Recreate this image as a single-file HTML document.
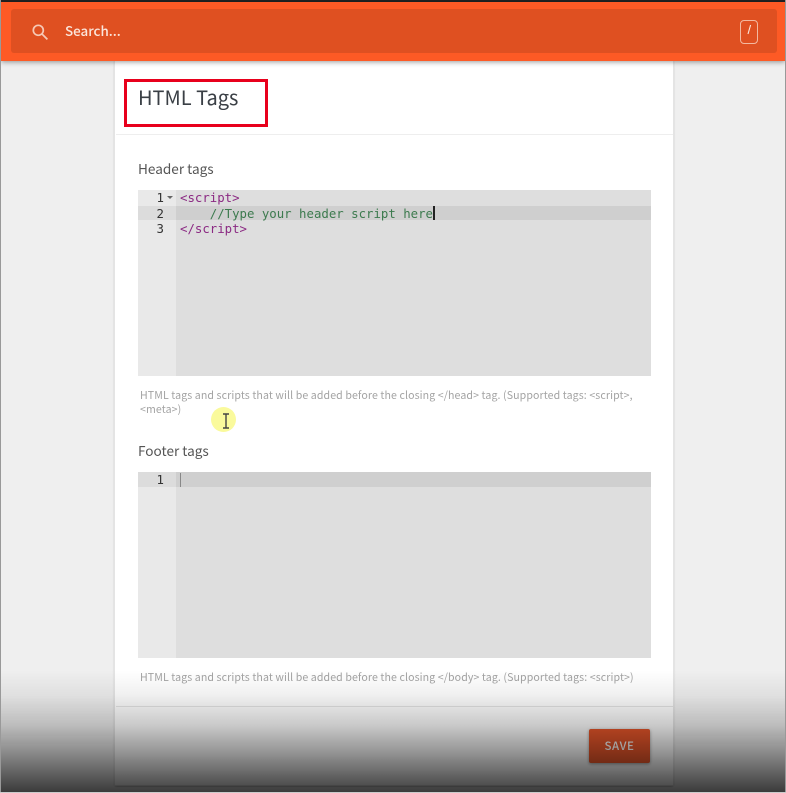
<!DOCTYPE html>
<html>
<head>
<meta charset="utf-8">
<style>
html,body{margin:0;padding:0;width:786px;height:793px;overflow:hidden;background:#efefef;}
body{position:relative;font-family:"Noto Sans CJK JP","Liberation Sans",sans-serif;}
#w{position:absolute;left:0;top:0;width:786px;height:793px;overflow:hidden;filter:blur(.3px);}
.a{position:absolute;white-space:nowrap;}
.code{font-family:"DejaVu Sans Mono","Liberation Mono",monospace;font-size:12.36px;line-height:15px;}
.num{font-family:"DejaVu Sans Mono","Liberation Mono",monospace;font-size:12.36px;line-height:15px;color:#333;width:26px;text-align:right;left:138px;}
.help{font-size:10.6px;color:#a3a3a3;line-height:15px;letter-spacing:.1px;}
.lab{font-size:13.6px;color:#555;line-height:20px;}
</style>
</head>
<body>
<div id="w">
<!-- card -->
<div class="a" style="left:115px;top:60px;width:558px;height:725px;background:#fff;box-shadow:0 0 0 1px #e4e4e4,0 1px 2px rgba(0,0,0,.5);"></div>
<div class="a" style="left:116px;top:134px;width:557px;height:1px;background:#eee;"></div>
<div class="a" style="left:116px;top:706px;width:557px;height:1px;background:#e6e6e6;"></div>

<!-- topbar -->
<div class="a" style="left:0;top:0;width:786px;height:2px;background:#222;"></div>
<div class="a" style="left:1px;top:2px;width:784px;height:59px;background:#fd5a25;box-shadow:0 1px 5px rgba(0,0,0,.4);"></div>
<div class="a" style="left:11px;top:9px;width:766px;height:44px;background:#df5021;border-radius:3px;"></div>
<svg class="a" style="left:31px;top:23px;" width="18" height="18" viewBox="0 0 18 18" fill="none" stroke="#f6c9b6" stroke-width="1.7"><circle cx="7.3" cy="7.3" r="5"/><path d="M11 11l5.4 5.4"/></svg>
<div class="a" style="left:65px;top:20px;font-size:13.4px;line-height:20px;color:#fbe6dc;font-weight:500;">Search...</div>
<div class="a" style="left:740px;top:20px;width:16px;height:22px;border:1px solid #f3b9a0;border-radius:4px;"></div>
<svg class="a" style="left:745px;top:24px;" width="8" height="12" viewBox="0 0 8 12" fill="none" stroke="#fbe6dc" stroke-width="1.1"><path d="M5.6 1L3 10"/></svg>

<!-- title -->
<div class="a" style="left:124px;top:79px;width:138px;height:42px;border:3px solid #e8001c;"></div>
<div class="a" style="left:138px;top:84px;font-size:20px;line-height:26px;color:#3a3f45;">HTML Tags</div>

<!-- header tags -->
<div class="a lab" style="left:138px;top:158px;">Header tags</div>
<div class="a" style="left:138px;top:190px;width:513px;height:186px;background:#dedede;"></div>
<div class="a" style="left:138px;top:190px;width:38px;height:186px;background:#e9e9e9;"></div>
<div class="a" style="left:138px;top:206px;width:38px;height:14px;background:#dcdcdc;"></div>
<div class="a" style="left:176px;top:206px;width:475px;height:14px;background:#cfcfcf;"></div>
<div class="a num" style="top:191px;">1</div>
<div class="a num" style="top:207px;">2</div>
<div class="a num" style="top:222px;">3</div>
<div class="a" style="left:167px;top:196px;width:0;height:0;border-left:3px solid transparent;border-right:3px solid transparent;border-top:3px solid #666;"></div>
<div class="a code" style="left:180px;top:191px;color:#8b2a83;">&lt;script&gt;</div>
<div class="a code" style="left:180px;top:207px;color:#3c7a4e;white-space:pre;">    //Type your header script here</div>
<div class="a" style="left:433px;top:206px;width:1.5px;height:14px;background:#222;"></div>
<div class="a code" style="left:180px;top:222px;color:#8b2a83;">&lt;/script&gt;</div>

<div class="a help" style="left:140px;top:388px;">HTML tags and scripts that will be added before the closing &lt;/head&gt; tag. (Supported tags: &lt;script&gt;,</div>
<div class="a help" style="left:140px;top:402px;">&lt;meta&gt;)</div>

<!-- cursor highlight -->
<div class="a" style="left:211px;top:407px;width:25px;height:25px;border-radius:50%;background:#fafa9c;"></div>
<svg class="a" style="left:221px;top:412px;" width="10" height="18" viewBox="0 0 10 18" fill="none" stroke="#444" stroke-width="1.4"><path d="M2 2h6M5 2v14M2 16h6"/></svg>

<!-- footer tags -->
<div class="a lab" style="left:138px;top:440px;">Footer tags</div>
<div class="a" style="left:138px;top:472px;width:513px;height:186px;background:#dedede;"></div>
<div class="a" style="left:138px;top:472px;width:38px;height:186px;background:#e9e9e9;"></div>
<div class="a" style="left:138px;top:472px;width:38px;height:15px;background:#dcdcdc;"></div>
<div class="a" style="left:176px;top:472px;width:475px;height:15px;background:#cfcfcf;"></div>
<div class="a num" style="top:473px;">1</div>
<div class="a" style="left:180px;top:473px;width:1px;height:14px;background:#888;"></div>

<div class="a help" style="left:140px;top:670px;">HTML tags and scripts that will be added before the closing &lt;/body&gt; tag. (Supported tags: &lt;script&gt;)</div>

<!-- save -->
<div class="a" style="left:589px;top:729px;width:61px;height:34px;background:#e8562a;border-radius:2px;box-shadow:0 1px 3px rgba(0,0,0,.4);color:#fff;font-size:11.5px;font-weight:500;line-height:34px;text-align:center;letter-spacing:.6px;">SAVE</div>

<!-- bottom fade -->
<div class="a" style="left:0;top:670px;width:786px;height:123px;background:linear-gradient(to bottom,rgba(0,0,0,0) 0%,rgba(0,0,0,.06) 20%,rgba(0,0,0,.21) 45%,rgba(0,0,0,.45) 70%,rgba(0,0,0,.76) 100%);"></div>
<div class="a" style="left:0;top:0;width:1px;height:793px;background:#999;"></div>
<div class="a" style="left:785px;top:0;width:1px;height:793px;background:#999;"></div>
<div class="a" style="left:0;top:792px;width:786px;height:1px;background:#ccc;"></div>
</div>
</body>
</html>
